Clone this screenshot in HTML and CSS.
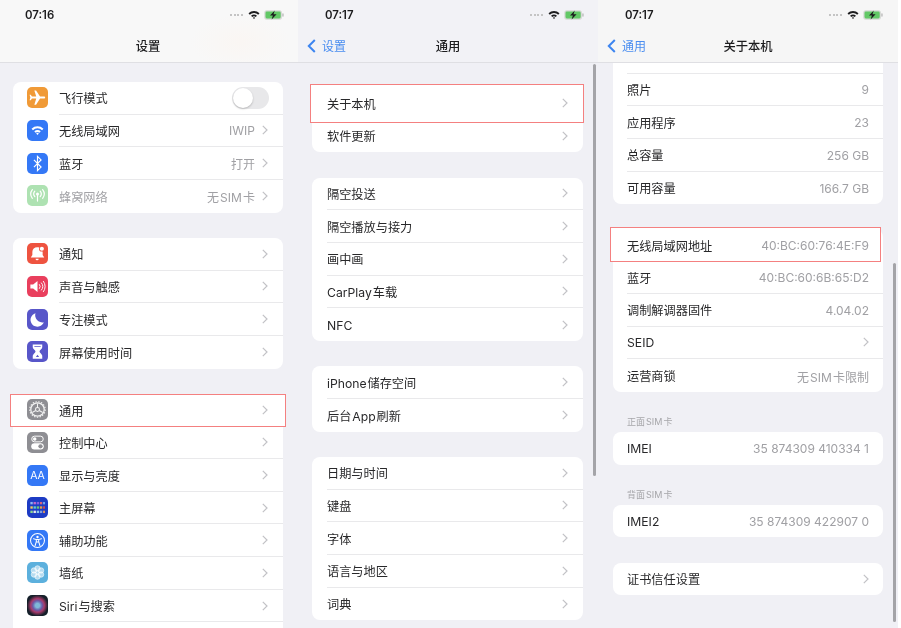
FILE: index.html
```html
<!DOCTYPE html>
<html lang="zh-CN">
<head>
<meta charset="utf-8">
<title>设置</title>
<link rel="stylesheet" href="styles.css">
</head>
<body>
<svg class="sprite" aria-hidden="true">
  <symbol id="wifi" viewBox="0 0 24 18"><path d="M1 6.500a16 16 0 0 1 22 0l-2.600 2.800a12.200 12.200 0 0 0-16.800 0z"/><path d="M6 11.500a9 9 0 0 1 12 0l-2.600 2.700a5.200 5.200 0 0 0-6.800 0z"/><path d="M12 18l-2.400-2.500a3.400 3.400 0 0 1 4.800 0z"/></symbol>
  <symbol id="batt" viewBox="0 0 20 10"><rect x=".3" y=".3" width="17.600" height="9.400" rx="2.500" fill="#d5d8d4"/><rect x="1.500" y="1.500" width="15.200" height="7" rx="1.400" fill="#62c866"/><rect x="18.300" y="3.300" width="1.300" height="3.400" rx=".6" fill="#b8b8b8"/><path d="M10.800.6L6 5.600h2.900L7.600 9.400 12.600 4.300H9.500z" fill="#1c1c1e"/></symbol>
  <symbol id="chev" viewBox="0 0 6 10"><path d="M.8.800L5 5 .8 9.200" fill="none" stroke="currentColor" stroke-width="1.200"/></symbol>
  <symbol id="backchev" viewBox="0 0 9 14"><path d="M7.800 1L1.800 7l6 6" fill="none" stroke="currentColor" stroke-width="2"/></symbol>
  <symbol id="plane" viewBox="0 0 24 24"><path fill="#fff" transform="rotate(90 12 12)" d="M21 16v-2.200l-7.800-5V3.500a1.200 1.200 0 0 0-2.400 0v5.300l-7.800 5V16l7.800-2.400V19l-2.200 1.600V22l3.400-1 3.400 1v-1.400L13.200 19v-5.400z"/></symbol>
  <symbol id="cell" viewBox="0 0 24 24"><g fill="none" stroke="#fff" stroke-width="1.500" stroke-linecap="round"><path d="M12 10v9"/><path d="M8.600 6.500a5.500 5.500 0 0 0 0 7"/><path d="M15.400 6.500a5.500 5.500 0 0 1 0 7"/><path d="M5.500 4.500a9 9 0 0 0 0 11"/><path d="M18.500 4.500a9 9 0 0 1 0 11"/></g><circle cx="12" cy="10" r="1.900" fill="#fff"/></symbol>
  <symbol id="bt" viewBox="0 0 24 24"><path d="M7.500 7.500l9 9L12 21V3l4.500 4.500-9 9" fill="none" stroke="#fff" stroke-width="1.500"/></symbol>
  <symbol id="bell" viewBox="0 0 24 24"><path fill="#fff" d="M11.500 4a6 6 0 0 0-6 6v4l-2 3h17l-2-3v-4a6 6 0 0 0-6-6z"/><path fill="#fff" d="M9.500 18.500h4a2 2 0 0 1-4 0z"/><circle cx="17.500" cy="6" r="3.600" fill="#ee5340"/><circle cx="17.500" cy="6" r="2.600" fill="#fff"/></symbol>
  <symbol id="sound" viewBox="0 0 24 24"><path fill="#fff" d="M3 9.500h3.500L12 5v14l-5.500-4.500H3z"/><g fill="none" stroke="#fff" stroke-width="1.200" stroke-linecap="round"><path d="M14.500 9.500a4 4 0 0 1 0 5"/><path d="M17 7.500a7 7 0 0 1 0 9"/><path d="M19.500 5.500a10.500 10.500 0 0 1 0 13"/></g></symbol>
  <symbol id="moon" viewBox="0 0 24 24"><path fill="#fff" d="M20 15.500A9 9 0 0 1 9.500 4a8.700 8.700 0 1 0 10.500 11.500z"/></symbol>
  <symbol id="glass" viewBox="0 0 24 24"><path fill="#fff" d="M6 3h12v3.500c0 2-3.500 3.700-3.500 5.500s3.500 3.500 3.500 5.500V21H6v-3.500c0-2 3.500-3.700 3.500-5.500S6 8.500 6 6.500z"/><path fill="#5856c9" d="M8 5h8v1H8zM10 19l2-3 2 3z"/></symbol>
  <symbol id="gear" viewBox="0 0 24 24"><g fill="none" stroke="#f2f2f2"><circle cx="12" cy="12" r="8.500" stroke-width="1.600"/><circle cx="12" cy="12" r="9.800" stroke-width="1.400" stroke-dasharray="1.800 1.800"/><circle cx="12" cy="12" r="2.500" stroke-width="1.300"/><path d="M12 9.500V4.500M14.200 13.200l4.400 2.500M9.800 13.200l-4.400 2.500" stroke-width="1.300"/></g></symbol>
  <symbol id="ctrl" viewBox="0 0 24 24"><rect x="4.700" y="4" width="14.600" height="7.200" rx="3.600" fill="none" stroke="#fff" stroke-width="1.200"/><circle cx="8.500" cy="7.600" r="2.200" fill="#fff"/><rect x="4.100" y="12.800" width="15.800" height="8" rx="4" fill="#fff"/><circle cx="15.800" cy="16.800" r="2.700" fill="#8e8e93"/></symbol>
  <symbol id="home" viewBox="0 0 24 24"><rect x="3" y="5" width="3" height="3" fill="#8fb4f0"/><rect x="7" y="5" width="3" height="3" fill="#c26ac9"/><rect x="11" y="5" width="3" height="3" fill="#8a5fe0"/><rect x="15" y="5" width="3" height="3" fill="#d9647a"/><rect x="19" y="5" width="2.500" height="3" fill="#6fa5e8"/><rect x="3" y="10.500" width="3" height="3" fill="#f0c95a"/><rect x="7" y="10.500" width="3" height="3" fill="#5fc8d8"/><rect x="11" y="10.500" width="3" height="3" fill="#68c878"/><rect x="15" y="10.500" width="3" height="3" fill="#e0a048"/><rect x="19" y="10.500" width="2.500" height="3" fill="#d94848"/><rect x="3" y="16" width="3" height="3" fill="#8fd890"/><rect x="7" y="16" width="3" height="3" fill="#e8e8e8"/><rect x="11" y="16" width="3" height="3" fill="#8fc8e8"/><rect x="15" y="16" width="3" height="3" fill="#80a0e0"/><rect x="19" y="16" width="2.500" height="3" fill="#d89060"/></symbol>
  <symbol id="acc" viewBox="0 0 24 24"><circle cx="12" cy="12" r="8.800" fill="none" stroke="#fff" stroke-width="1.300"/><circle cx="12" cy="7.500" r="1.500" fill="#fff"/><path d="M7 9.800l3.500 1v2.700L9 18.300M17 9.800l-3.500 1v2.700l1.500 4.800M10.500 10.800h3M11 14h2" fill="none" stroke="#fff" stroke-width="1.300" stroke-linecap="round"/></symbol>
  <symbol id="flower" viewBox="0 0 24 24"><g fill="#fff" fill-opacity=".55" stroke="#fff" stroke-width=".7"><circle cx="12" cy="6.800" r="3.400"/><circle cx="12" cy="17.200" r="3.400"/><circle cx="7.500" cy="9.400" r="3.400"/><circle cx="16.500" cy="9.400" r="3.400"/><circle cx="7.500" cy="14.600" r="3.400"/><circle cx="16.500" cy="14.600" r="3.400"/><circle cx="12" cy="12" r="2.400"/></g></symbol>
</svg>

<main class="screens">

  <section class="phone">
    <header class="nav nav-light">
      <div class="status"><span class="time">07:16</span><span class="dots"></span><svg class="wifi"><use href="#wifi"/></svg><svg class="batt"><use href="#batt"/></svg></div>
      <div class="bar bar-first"><span></span><h1 class="title">设置</h1><span></span></div>
    </header>
    <div class="scroll top-82">
      <div class="card">
        <div class="row with-icon"><span class="icon orange"><svg><use href="#plane"/></svg></span><div class="body"><span class="name">飞行模式</span><span class="toggle"></span></div></div>
        <div class="row with-icon"><span class="icon blue"><svg class="wifi-white"><use href="#wifi"/></svg></span><div class="body"><span class="name">无线局域网</span><span class="val">IWIP</span><svg class="chev"><use href="#chev"/></svg></div></div>
        <div class="row with-icon"><span class="icon blue"><svg><use href="#bt"/></svg></span><div class="body"><span class="name">蓝牙</span><span class="val">打开</span><svg class="chev"><use href="#chev"/></svg></div></div>
        <div class="row with-icon"><span class="icon mint"><svg><use href="#cell"/></svg></span><div class="body"><span class="name muted">蜂窝网络</span><span class="val tight">无 SIM 卡</span><svg class="chev"><use href="#chev"/></svg></div></div>
      </div>
      <div class="card">
        <div class="row with-icon"><span class="icon red"><svg><use href="#bell"/></svg></span><div class="body"><span class="name">通知</span><svg class="chev"><use href="#chev"/></svg></div></div>
        <div class="row with-icon"><span class="icon pink"><svg><use href="#sound"/></svg></span><div class="body"><span class="name">声音与触感</span><svg class="chev"><use href="#chev"/></svg></div></div>
        <div class="row with-icon"><span class="icon indigo"><svg><use href="#moon"/></svg></span><div class="body"><span class="name">专注模式</span><svg class="chev"><use href="#chev"/></svg></div></div>
        <div class="row with-icon"><span class="icon indigo"><svg><use href="#glass"/></svg></span><div class="body"><span class="name">屏幕使用时间</span><svg class="chev"><use href="#chev"/></svg></div></div>
      </div>
      <div class="card">
        <div class="row with-icon marked mark-a"><span class="icon grey"><svg><use href="#gear"/></svg></span><div class="body"><span class="name">通用</span><svg class="chev"><use href="#chev"/></svg></div></div>
        <div class="row with-icon"><span class="icon grey"><svg><use href="#ctrl"/></svg></span><div class="body"><span class="name">控制中心</span><svg class="chev"><use href="#chev"/></svg></div></div>
        <div class="row with-icon"><span class="icon blue aa">AA</span><div class="body"><span class="name">显示与亮度</span><svg class="chev"><use href="#chev"/></svg></div></div>
        <div class="row with-icon"><span class="icon navy"><svg><use href="#home"/></svg></span><div class="body"><span class="name">主屏幕</span><svg class="chev"><use href="#chev"/></svg></div></div>
        <div class="row with-icon"><span class="icon blue"><svg><use href="#acc"/></svg></span><div class="body"><span class="name">辅助功能</span><svg class="chev"><use href="#chev"/></svg></div></div>
        <div class="row with-icon"><span class="icon sky"><svg><use href="#flower"/></svg></span><div class="body"><span class="name">墙纸</span><svg class="chev"><use href="#chev"/></svg></div></div>
        <div class="row with-icon"><span class="icon siri"></span><div class="body"><span class="name">Siri 与搜索</span><svg class="chev"><use href="#chev"/></svg></div></div>
        <div class="row with-icon"><span class="icon green"></span><div class="body"></div></div>
      </div>
    </div>
  </section>

  <section class="phone">
    <header class="nav nav-flat">
      <div class="status"><span class="time">07:17</span><span class="dots"></span><svg class="wifi"><use href="#wifi"/></svg><svg class="batt"><use href="#batt"/></svg></div>
      <div class="bar"><a class="back"><svg class="back-chev"><use href="#backchev"/></svg>设置</a><h1 class="title">通用</h1><span></span></div>
    </header>
    <div class="scroll top-87">
      <div class="card">
        <div class="row marked mark-b"><div class="body"><span class="name">关于本机</span><svg class="chev"><use href="#chev"/></svg></div></div>
        <div class="row"><div class="body"><span class="name">软件更新</span><svg class="chev"><use href="#chev"/></svg></div></div>
      </div>
      <div class="card">
        <div class="row"><div class="body"><span class="name">隔空投送</span><svg class="chev"><use href="#chev"/></svg></div></div>
        <div class="row"><div class="body"><span class="name">隔空播放与接力</span><svg class="chev"><use href="#chev"/></svg></div></div>
        <div class="row"><div class="body"><span class="name">画中画</span><svg class="chev"><use href="#chev"/></svg></div></div>
        <div class="row"><div class="body"><span class="name">CarPlay 车载</span><svg class="chev"><use href="#chev"/></svg></div></div>
        <div class="row"><div class="body"><span class="name">NFC</span><svg class="chev"><use href="#chev"/></svg></div></div>
      </div>
      <div class="card">
        <div class="row"><div class="body"><span class="name">iPhone 储存空间</span><svg class="chev"><use href="#chev"/></svg></div></div>
        <div class="row"><div class="body"><span class="name">后台 App 刷新</span><svg class="chev"><use href="#chev"/></svg></div></div>
      </div>
      <div class="card">
        <div class="row"><div class="body"><span class="name">日期与时间</span><svg class="chev"><use href="#chev"/></svg></div></div>
        <div class="row"><div class="body"><span class="name">键盘</span><svg class="chev"><use href="#chev"/></svg></div></div>
        <div class="row"><div class="body"><span class="name">字体</span><svg class="chev"><use href="#chev"/></svg></div></div>
        <div class="row"><div class="body"><span class="name">语言与地区</span><svg class="chev"><use href="#chev"/></svg></div></div>
        <div class="row"><div class="body"><span class="name">词典</span><svg class="chev"><use href="#chev"/></svg></div></div>
      </div>
    </div>
    <span class="scrollbar bar-general"></span>
  </section>

  <section class="phone">
    <header class="nav nav-glass">
      <div class="status"><span class="time">07:17</span><span class="dots"></span><svg class="wifi"><use href="#wifi"/></svg><svg class="batt"><use href="#batt"/></svg></div>
      <div class="bar"><a class="back"><svg class="back-chev"><use href="#backchev"/></svg>通用</a><h1 class="title">关于本机</h1><span></span></div>
    </header>
    <div class="scroll top-40">
      <div class="card first-card">
        <div class="row"><div class="body"><span class="name">视频</span><span class="val end">0</span></div></div>
        <div class="row"><div class="body"><span class="name">照片</span><span class="val end">9</span></div></div>
        <div class="row"><div class="body"><span class="name">应用程序</span><span class="val end">23</span></div></div>
        <div class="row"><div class="body"><span class="name">总容量</span><span class="val end">256 GB</span></div></div>
        <div class="row"><div class="body"><span class="name">可用容量</span><span class="val end">166.7 GB</span></div></div>
      </div>
      <div class="card">
        <div class="row marked mark-c"><div class="body"><span class="name">无线局域网地址</span><span class="val end">40:BC:60:76:4E:F9</span></div></div>
        <div class="row"><div class="body"><span class="name">蓝牙</span><span class="val end">40:BC:60:6B:65:D2</span></div></div>
        <div class="row"><div class="body"><span class="name">调制解调器固件</span><span class="val end">4.04.02</span></div></div>
        <div class="row"><div class="body"><span class="name">SEID</span><svg class="chev"><use href="#chev"/></svg></div></div>
        <div class="row"><div class="body"><span class="name">运营商锁</span><span class="val end tight">无 SIM 卡限制</span></div></div>
      </div>
      <p class="section-label">正面 SIM 卡</p>
      <div class="card">
        <div class="row"><div class="body"><span class="name">IMEI</span><span class="val end">35 874309 410334 1</span></div></div>
      </div>
      <p class="section-label">背面 SIM 卡</p>
      <div class="card">
        <div class="row"><div class="body"><span class="name">IMEI2</span><span class="val end">35 874309 422907 0</span></div></div>
      </div>
      <div class="card">
        <div class="row"><div class="body"><span class="name">证书信任设置</span><svg class="chev"><use href="#chev"/></svg></div></div>
      </div>
    </div>
    <span class="scrollbar bar-about"></span>
  </section>

</main>
</body>
</html>
```

FILE: styles.css
```css
* { box-sizing: border-box; }
html, body { margin: 0; padding: 0; background: #fff; }
body {
  width: 901px;
  height: 628px;
  overflow: hidden;
  font-family: Inter, "Noto Sans CJK SC", sans-serif;
  color: #2a2a2c;
}
.sprite { position: absolute; width: 0; height: 0; }

.screens { display: flex; width: 898px; height: 628px; filter: blur(.4px); }
.phone { position: relative; width: 300px; height: 628px; overflow: hidden; background: #f0f0f5; }
.phone:first-child { width: 298px; }

/* navigation bar */
.nav { position: absolute; top: 0; left: 0; right: 0; height: 62.500px; z-index: 3; border-bottom: 1px solid #dfdfe3; }
.nav-light { background: radial-gradient(50px 28px at 240px 42px, #faf6f3, #f8f8f8 100%); }
.nav-flat { background: #f2f2f6; }
.nav-glass { background: #f6f6f6; }

.status { display: flex; align-items: center; height: 29.500px; }
.phone:first-child .status { padding-left: 25px; padding-right: 14px; }
.phone:nth-child(2) .status { padding-left: 27px; padding-right: 14px; }
.phone:nth-child(3) .status { padding-left: 27px; padding-right: 15px; }
.time { font-size: 11.400px; font-weight: 600; color: #1c1c1e; }
.dots { margin-left: auto; width: 13px; height: 2px; background: repeating-linear-gradient(90deg, #c4c4c4 0 2px, transparent 2px 3.600px); }
.wifi { width: 12px; height: 9px; margin-left: 5px; fill: #1c1c1e; }
.batt { width: 20px; height: 10px; margin-left: 4px; }

.bar { display: grid; grid-template-columns: 1fr auto 1fr; align-items: center; height: 32px; }
.bar-first { padding-right: 2px; }
.title { margin: 0; font-size: 12.300px; font-weight: 500; color: #1c1c1e; }
.back { display: flex; align-items: center; padding-left: 9px; gap: 6px; font-size: 12px; color: #4a8df0; }
.back-chev { width: 9px; height: 14px; color: #3d85f0; }

/* scroll content */
.scroll { display: flex; flex-direction: column; gap: 25.400px; }
.phone:first-child .scroll { padding: 0 15px 0 13px; }
.phone:nth-child(2) .scroll { padding: 0 15px 0 14px; }
.phone:nth-child(3) .scroll { padding: 0 15px 0 15px; }
.top-82 { margin-top: 82px; }
.top-87 { margin-top: 87px; }
.top-40 { margin-top: 41px; }
.first-card { margin-bottom: -.900px; }

.card { background: #fff; border-radius: 8px; }
.row { position: relative; display: flex; align-items: stretch; height: 32.650px; padding-left: 15px; }
.phone:nth-child(3) .row { padding-left: 14px; }
.phone:nth-child(3) .body { padding-right: 14px; }
.row.with-icon { padding-left: 14px; gap: 11px; align-items: center; }
.body { flex: 1; min-width: 0; height: 100%; display: flex; align-items: center; padding-right: 15px; border-bottom: 1px solid #e9e9eb; position: relative; z-index: 1; }
.row:last-child .body, .marked .body { border-bottom: 0; }

.name { font-size: 12.200px; color: #28282a; flex: 1; white-space: nowrap; word-spacing: -2.500px; padding-top: 1px; }
.name.muted { color: #a3a3a7; }
.val { font-size: 12px; color: #a0a0a4; white-space: nowrap; margin-right: 7px; padding-top: 1px; }
.val.end { margin-right: 0; }
.val.tight { word-spacing: -2.200px; }
.chev { width: 6px; height: 10px; color: #c2c2c6; flex: none; }

.toggle { position: relative; width: 37px; height: 22px; border-radius: 11px; background: #e8e8ea; margin-right: -1px; }
.toggle::after { content: ""; position: absolute; left: 1px; top: 1px; width: 20px; height: 20px; border-radius: 50%; background: #fff; box-shadow: 0 1px 2px rgba(0,0,0,.22); }

/* settings icons */
.icon { position: relative; z-index: 1; flex: none; display: flex; align-items: center; justify-content: center; width: 21px; height: 21px; margin-bottom: 1px; border-radius: 5px; }
.icon svg { width: 19px; height: 19px; }
.icon .wifi-white { width: 13px; height: 10px; fill: #fff; }
.orange { background: #f09a37; }
.blue { background: #3478f6; }
.mint { background: #aee2b2; }
.red { background: #ee5340; }
.pink { background: #e93f5d; }
.indigo { background: #5856c9; }
.grey { background: #8e8e93; }
.navy { background: #1d3bc4; }
.sky { background: #5cb0dd; }
.green { background: #5fc96c; }
.aa { color: #fff; font-size: 10.500px; font-weight: 400; }
.siri { background: radial-gradient(circle at 50% 50%, #7fb8d8 0 14%, #6a5aa8 32%, #a83a6a 46%, #15202a 70%); }

/* red annotations around a row */
.marked::before { content: ""; position: absolute; background: #fff; border: 1.500px solid #f48080; }
.mark-a::before { inset: 0 -3px 0 -3px; }
.mark-b::before { inset: -3px -1px -3px -2px; }
.mark-c::before { inset: -1.500px 2px -1px -3px; }

.section-label { margin: -1.400px 0 -21.400px; padding-left: 14px; font-size: 9px; line-height: 12px; color: #a6a6aa; word-spacing: -1.500px; }

/* scroll indicators */
.scrollbar { position: absolute; right: 2px; width: 3px; border-radius: 2px; background: #a4a4a8; z-index: 2; }
.bar-general { top: 64px; height: 412px; }
.bar-about { top: 263px; height: 359px; }
```
